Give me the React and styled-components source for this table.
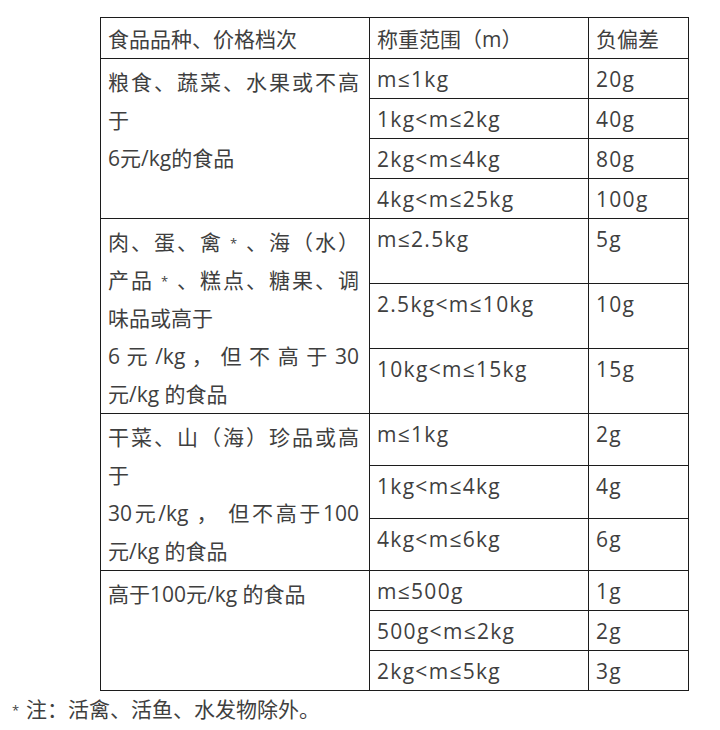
import React from 'react';
import styled, { createGlobalStyle } from 'styled-components';

const GlobalStyle = createGlobalStyle`
  html, body {
    margin: 0;
    padding: 0;
    background: #ffffff;
  }
  body {
    font-family: "Open Sans", "Noto Sans CJK SC", sans-serif;
    color: #3f3f3f;
  }
`;

const Page = styled.div`
  width: 720px;
  height: 730px;
  padding: 17px 0 0 5px;
  box-sizing: border-box;
  background: #fff;
`;

const Table = styled.table`
  margin-left: 95px;
  width: 588px;
  table-layout: fixed;
  border-collapse: collapse;
  font-size: 21px;
  line-height: 38px;
  color: #3f3f3f;
`;

const Cell = styled.td`
  border: 1px solid #1c1c1c;
  vertical-align: top;
  padding: ${(p) => (p.$group ? '4px 10px 0 7px' : '1px 8px 0 7px')};
  text-align: ${(p) => (p.$group ? 'justify' : 'left')};
  height: ${(p) => (p.$group ? 'auto' : '38px')};
  white-space: ${(p) => (p.$group ? 'normal' : 'nowrap')};
  letter-spacing: ${(p) => (p.$group ? '0' : '1.3px')};
`;

const HeadCell = styled.th`
  border: 1px solid #1c1c1c;
  vertical-align: top;
  padding: 2px 8px 0 7px;
  text-align: left;
  font-weight: 400;
  height: 38px;
`;

const Star = styled.span`
  display: inline-block;
  width: 21px;
  text-align: center;
  font-size: 13px;
  line-height: 1;
  vertical-align: 2px;
`;

const Note = styled.div`
  font-size: 21px;
  line-height: 36px;
  color: #3f3f3f;
`;

const groups = [
  {
    name: (
      <>
        粮食、蔬菜、水果或不高于
        <br />
        6元/kg的食品
      </>
    ),
    rows: [
      ['m≤1kg', '20g'],
      ['1kg<m≤2kg', '40g'],
      ['2kg<m≤4kg', '80g'],
      ['4kg<m≤25kg', '100g'],
    ],
  },
  {
    name: (
      <>
        肉、蛋、禽<Star>*</Star>、海（水）产品<Star>*</Star>、糕点、糖果、调味品或高于
        <br />
        6 元 /kg ， 但 不 高 于 30 元/kg 的食品
      </>
    ),
    rows: [
      ['m≤2.5kg', '5g'],
      ['2.5kg<m≤10kg', '10g'],
      ['10kg<m≤15kg', '15g'],
    ],
  },
  {
    name: (
      <>
        干菜、山（海）珍品或高于
        <br />
        30元/kg ， 但不高于100 元/kg 的食品
      </>
    ),
    rows: [
      ['m≤1kg', '2g'],
      ['1kg<m≤4kg', '4g'],
      ['4kg<m≤6kg', '6g'],
    ],
  },
  {
    name: <>高于100元/kg 的食品</>,
    rows: [
      ['m≤500g', '1g'],
      ['500g<m≤2kg', '2g'],
      ['2kg<m≤5kg', '3g'],
    ],
  },
];

export default function App() {
  return (
    <Page>
      <GlobalStyle />
      <Table>
        <colgroup>
          <col style={{ width: '269px' }} />
          <col style={{ width: '219px' }} />
          <col style={{ width: '100px' }} />
        </colgroup>
        <thead>
          <tr>
            <HeadCell>食品品种、价格档次</HeadCell>
            <HeadCell>称重范围（m）</HeadCell>
            <HeadCell>负偏差</HeadCell>
          </tr>
        </thead>
        <tbody>
          {groups.map((g, gi) =>
            g.rows.map((r, ri) => (
              <tr key={`${gi}-${ri}`}>
                {ri === 0 && (
                  <Cell $group rowSpan={g.rows.length}>
                    {g.name}
                  </Cell>
                )}
                <Cell>{r[0]}</Cell>
                <Cell>{r[1]}</Cell>
              </tr>
            ))
          )}
        </tbody>
      </Table>
      <Note>
        <Star>*</Star>注：活禽、活鱼、水发物除外。
      </Note>
    </Page>
  );
}
